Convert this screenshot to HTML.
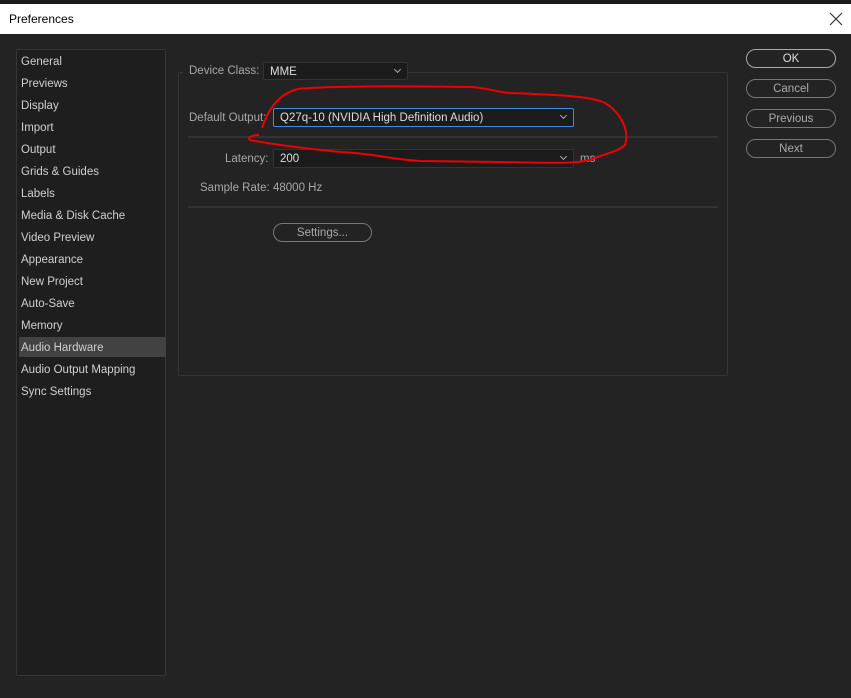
<!DOCTYPE html>
<html><head><meta charset="utf-8"><style>
body{margin:0;width:851px;height:698px;background:#232323;position:relative;overflow:hidden;font-family:"Liberation Sans",sans-serif;font-size:12px;color:#c8c8c8}
.top{position:absolute;left:0;top:0;width:851px;height:4px;background:#1a1a1a}
.title{position:absolute;left:0;top:4px;width:851px;height:30px;background:#fff;color:#000;font-size:12px}
.title span{position:absolute;left:9px;top:8px}
.side{position:absolute;left:16px;top:49px;width:148px;height:625px;background:#1e1e1e;border:1px solid #363636;border-radius:2px}
.it{position:absolute;left:4px;height:20px;line-height:22px;width:143px;color:#d0d0d0;font-size:11.5px}
.sel{background:#424242;left:2px;padding-left:2px;width:145px}
.grp{position:absolute;left:178px;top:72px;width:548px;height:302px;border:1px solid #353535;border-radius:2px}
.lbl{position:absolute;color:#a8a8a8;font-size:11.5px}
.dd{position:absolute;background:#1b1b1b;border:1px solid #333;border-radius:2px;height:17px;line-height:17px;color:#ddd;padding-left:6px;box-sizing:border-box;font-size:11.5px}
.dd:after{content:"";position:absolute;right:7px;top:4px;width:4px;height:4px;border-right:1px solid #aaa;border-bottom:1px solid #aaa;transform:rotate(45deg)}
.hr{position:absolute;left:188px;width:530px;height:2px;background:#333}
.btn{position:absolute;border:1.5px solid #777;border-radius:10px;height:17px;line-height:19px;text-align:center;color:#aaa;box-sizing:content-box;font-size:11.5px}
</style></head><body>
<div class="top"></div>
<div class="title"><span>Preferences</span>
<svg style="position:absolute;left:829px;top:8px" width="14" height="14"><path d="M1,1 L13,13 M13,1 L1,13" stroke="#333" stroke-width="1.2"/></svg></div>
<div class="side">
<div class="it" style="top:1px">General</div>
<div class="it" style="top:23px">Previews</div>
<div class="it" style="top:45px">Display</div>
<div class="it" style="top:67px">Import</div>
<div class="it" style="top:89px">Output</div>
<div class="it" style="top:111px">Grids &amp; Guides</div>
<div class="it" style="top:133px">Labels</div>
<div class="it" style="top:155px">Media &amp; Disk Cache</div>
<div class="it" style="top:177px">Video Preview</div>
<div class="it" style="top:199px">Appearance</div>
<div class="it" style="top:221px">New Project</div>
<div class="it" style="top:243px">Auto-Save</div>
<div class="it" style="top:265px">Memory</div>
<div class="it sel" style="top:287px">Audio Hardware</div>
<div class="it" style="top:309px">Audio Output Mapping</div>
<div class="it" style="top:331px">Sync Settings</div>
</div>
<div class="grp"></div>
<div style="position:absolute;left:183px;top:62px;width:80px;height:18px;background:#232323"></div>
<div class="lbl" style="left:189px;top:65px">Device Class:</div>
<div class="dd" style="left:263px;top:62px;width:145px;height:18px;line-height:18px">MME</div>
<div class="lbl" style="left:189px;top:112px">Default Output:</div>
<div class="dd" style="left:273px;top:108px;width:301px;height:19px;line-height:19px;border-color:#3b8fe0">Q27q-10 (NVIDIA High Definition Audio)</div>
<div class="hr" style="top:136px"></div>
<div class="lbl" style="left:225px;top:153px">Latency:</div>
<div class="dd" style="left:273px;top:149px;width:301px;height:19px;line-height:19px">200</div>
<div class="lbl" style="left:580px;top:153px">ms</div>
<div class="lbl" style="left:200px;top:182px">Sample Rate:</div>
<div class="lbl" style="left:273px;top:182px">48000 Hz</div>
<div class="hr" style="top:206px"></div>
<div class="btn" style="left:273px;top:223px;width:97px">Settings...</div>
<div class="btn" style="left:746px;top:49px;width:88px;color:#ddd;border-color:#aaa">OK</div>
<div class="btn" style="left:746px;top:79px;width:88px">Cancel</div>
<div class="btn" style="left:746px;top:109px;width:88px">Previous</div>
<div class="btn" style="left:746px;top:139px;width:88px">Next</div>
<svg style="position:absolute;left:0;top:0" width="851" height="698"><path d="M262,128 C268,110 278,94 298,89 C330,86 400,86 470,87 C490,88 495,92 510,93 C560,95 590,96 605,103 C620,112 630,130 625,145 C618,152 600,155 590,160 C570,165 545,162 420,161 C390,159 370,153 340,152 C300,148 270,144 250,140 C246,137 254,135 259,135" fill="none" stroke="#e00" stroke-width="2"/></svg>
</body></html>
